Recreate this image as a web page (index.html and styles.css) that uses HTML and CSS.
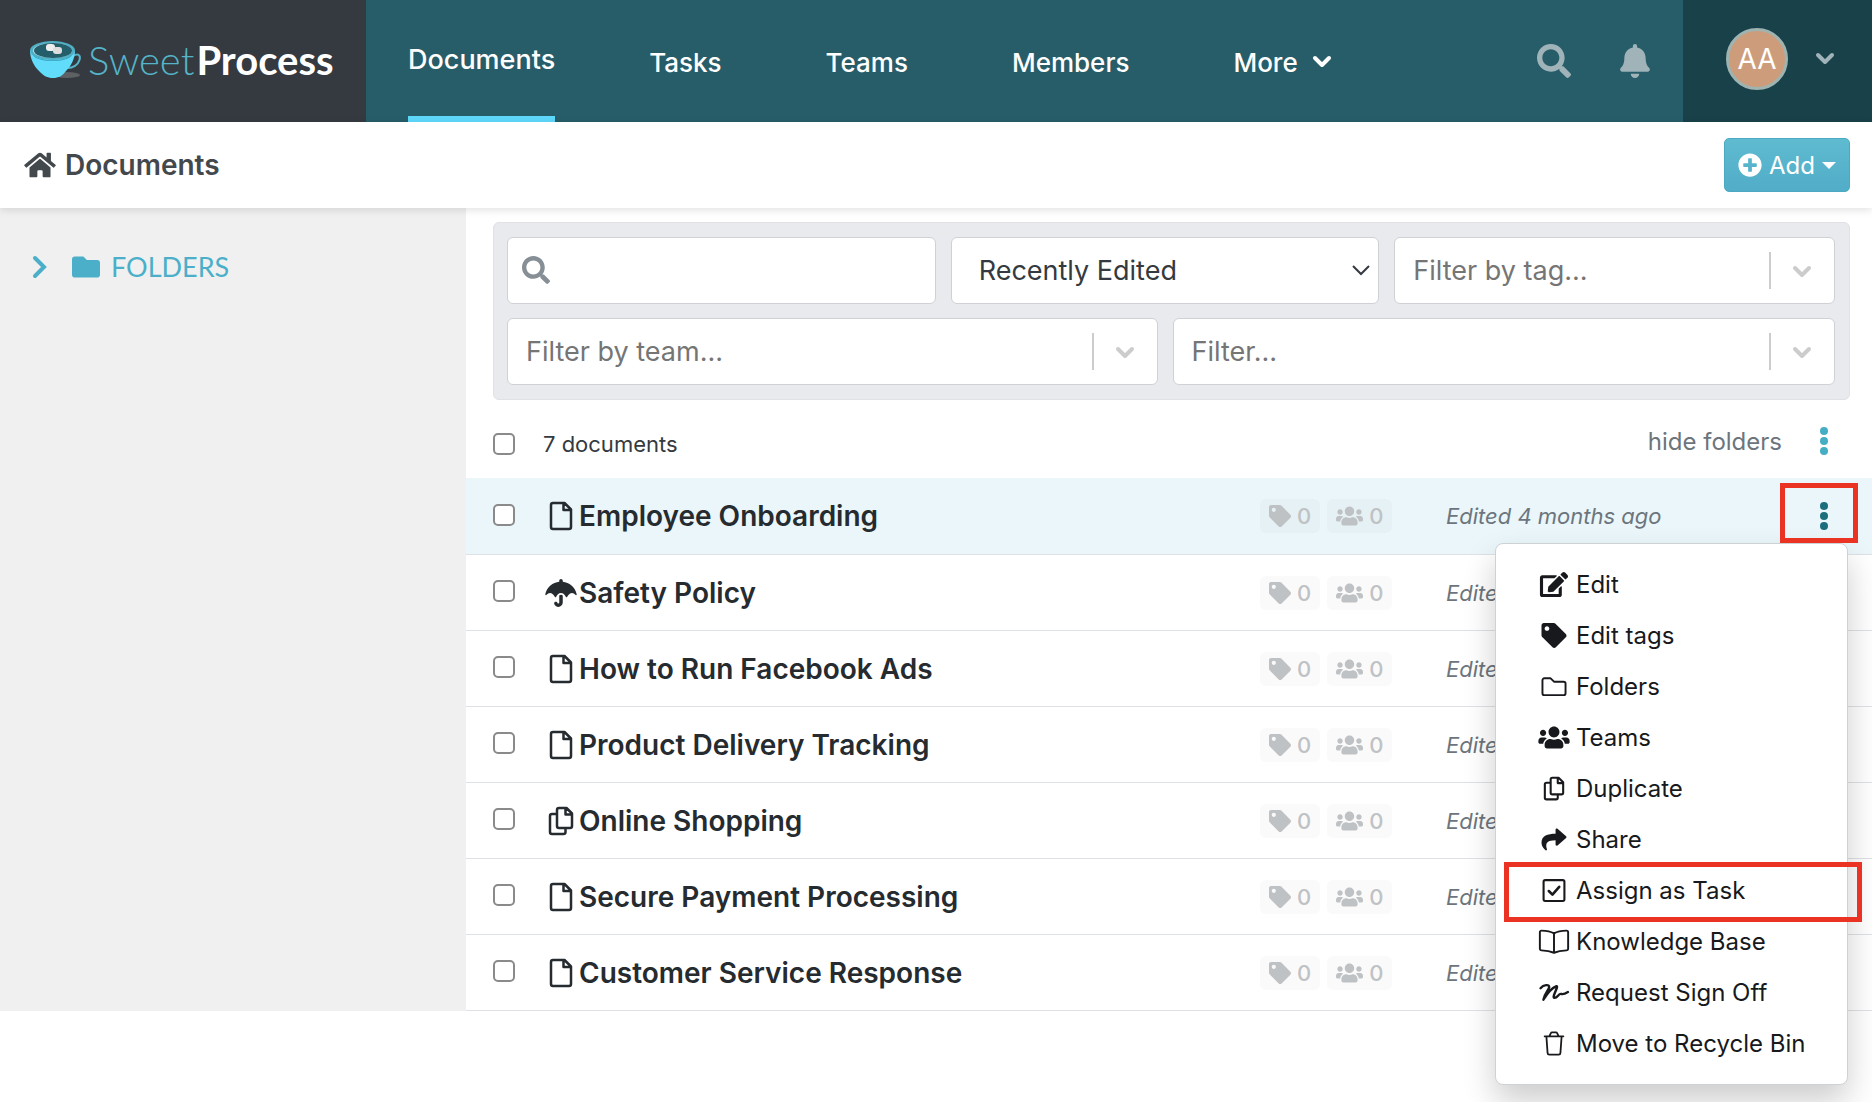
FILE: index.html
```html
<!DOCTYPE html>
<html lang="en">
<head>
  <meta charset="UTF-8" />
  <meta name="viewport" content="width=device-width, initial-scale=1.0"/>
  <title>Documents | SweetProcess</title>
  <link rel="stylesheet" href="styles.css">
</head>
<body>

<!-- icon sprite -->
<svg class="sprite" aria-hidden="true">
  <symbol id="i-search" viewBox="0 0 512 512"><path d="M505 442.7L405.3 343c-4.5-4.5-10.6-7-17-7H372c27.6-35.3 44-79.7 44-128C416 93.1 322.9 0 208 0S0 93.1 0 208s93.1 208 208 208c48.3 0 92.7-16.4 128-44v16.3c0 6.4 2.5 12.5 7 17l99.7 99.7c9.4 9.4 24.6 9.4 33.9 0l28.3-28.3c9.4-9.4 9.4-24.6.1-34zM208 336c-70.7 0-128-57.2-128-128 0-70.7 57.2-128 128-128 70.7 0 128 57.2 128 128 0 70.7-57.2 128-128 128z"/></symbol>
  <symbol id="i-bell" viewBox="0 0 448 512"><path d="M224 512c35.32 0 63.97-28.65 63.97-64H160.03c0 35.35 28.65 64 63.97 64zm215.39-149.71c-19.32-20.76-55.47-51.99-55.47-154.29 0-77.7-54.48-139.9-127.94-155.16V32c0-17.67-14.32-32-31.98-32s-31.98 14.33-31.98 32v20.84C118.56 68.1 64.08 130.3 64.08 208c0 102.3-36.15 133.53-55.47 154.29-6 6.45-8.66 14.16-8.61 21.71.11 16.4 12.98 32 32.1 32h383.8c19.12 0 32-15.6 32.1-32 .05-7.55-2.61-15.27-8.61-21.71z"/></symbol>
  <symbol id="i-home" viewBox="0 0 576 512"><path d="M280.37 148.26L96 300.11V464a16 16 0 0 0 16 16l112.06-.29a16 16 0 0 0 15.92-16V368a16 16 0 0 1 16-16h64a16 16 0 0 1 16 16v95.64a16 16 0 0 0 16 16.05L464 480a16 16 0 0 0 16-16V300L295.67 148.26a12.19 12.19 0 0 0-15.3 0zM571.6 251.47L488 182.56V44.05a12 12 0 0 0-12-12h-56a12 12 0 0 0-12 12v72.61L318.47 43a48 48 0 0 0-61 0L4.34 251.47a12 12 0 0 0-1.6 16.9l25.5 31A12 12 0 0 0 45.15 301l235.22-193.74a12.19 12.19 0 0 1 15.3 0L530.9 301a12 12 0 0 0 16.9-1.6l25.5-31a12 12 0 0 0-1.7-16.93z"/></symbol>
  <symbol id="i-plus" viewBox="0 0 512 512"><path d="M256 8C119 8 8 119 8 256s111 248 248 248 248-111 248-248S393 8 256 8zm144 276c0 6.6-5.4 12-12 12h-92v92c0 6.6-5.4 12-12 12h-56c-6.6 0-12-5.4-12-12v-92h-92c-6.6 0-12-5.4-12-12v-56c0-6.6 5.4-12 12-12h92v-92c0-6.6 5.4-12 12-12h56c6.6 0 12 5.4 12 12v92h92c6.6 0 12 5.4 12 12v56z"/></symbol>
  <symbol id="i-folder" viewBox="0 0 512 512"><path d="M464 128H272l-64-64H48C21.49 64 0 85.49 0 112v288c0 26.51 21.49 48 48 48h416c26.51 0 48-21.49 48-48V176c0-26.51-21.49-48-48-48z"/></symbol>
  <symbol id="i-tag" viewBox="0 0 512 512"><path d="M0 252.118V48C0 21.49 21.49 0 48 0h204.118a48 48 0 0 1 33.941 14.059l211.882 211.882c18.745 18.745 18.745 49.137 0 67.882L293.823 497.941c-18.745 18.745-49.137 18.745-67.882 0L14.059 286.059A48 48 0 0 1 0 252.118zM112 64c-26.51 0-48 21.49-48 48s21.49 48 48 48 48-21.49 48-48-21.49-48-48-48z"/></symbol>
  <symbol id="i-users" viewBox="0 0 640 512"><path d="M96 224c35.3 0 64-28.7 64-64s-28.7-64-64-64-64 28.7-64 64 28.7 64 64 64zm448 0c35.3 0 64-28.7 64-64s-28.7-64-64-64-64 28.7-64 64 28.7 64 64 64zm32 32h-64c-17.6 0-33.5 7.1-45.1 18.6 40.3 22.1 68.9 62 75.1 109.4h66c17.7 0 32-14.3 32-32v-32c0-35.3-28.7-64-64-64zm-256 0c61.9 0 112-50.1 112-112S381.9 32 320 32 208 82.1 208 144s50.1 112 112 112zm76.8 32h-8.3c-20.8 10-43.9 16-68.5 16s-47.6-6-68.5-16h-8.3C179.6 288 128 339.6 128 403.2V432c0 26.5 21.5 48 48 48h288c26.5 0 48-21.5 48-48v-28.8c0-63.6-51.6-115.2-115.2-115.2zm-223.7-13.4C161.5 263.1 145.6 256 128 256H64c-35.3 0-64 28.7-64 64v32c0 17.7 14.3 32 32 32h65.9c6.3-47.4 34.9-87.3 75.2-109.4z"/></symbol>
  <symbol id="i-share" viewBox="0 0 512 512"><path d="M503.691 189.836L327.687 37.851C312.281 24.546 288 35.347 288 56.015v80.053C127.371 137.907 0 170.1 0 322.326c0 61.441 39.581 122.309 83.333 154.132 13.653 9.931 33.111-2.533 28.077-18.631C66.066 312.814 132.917 274.316 288 272.085V360c0 20.7 24.3 31.453 39.687 18.164l176.004-152c11.071-9.562 11.086-26.753 0-36.328z"/></symbol>
  <symbol id="i-umbrella" viewBox="0 0 576 512"><path d="M575.7 280.8C547.1 144.5 437.3 62.6 320 49.9V32c0-17.7-14.3-32-32-32s-32 14.3-32 32v17.9C138.3 62.6 29.5 144.5.3 280.8c-2.2 10.1 8.5 21.3 18.7 11.4 52-55 107.7-52.4 158.6 37 5.3 9.5 14.9 8.6 19.7 0 20.2-35.4 44.9-73.2 90.7-73.2 58.5 0 88.2 68.8 90.7 73.2 4.8 8.6 14.4 9.5 19.7 0 51-89.5 107.1-91.4 158.6-37 10.3 10 20.9-1.3 18.7-11.4zM256 301.7V432c0 8.8-7.2 16-16 16-7.8 0-13.2-5.3-15.1-10.7-5.9-16.7-24.1-25.4-40.8-19.5-16.7 5.9-25.4 24.2-19.5 40.8 11.2 31.9 41.6 53.3 75.4 53.3 44.1 0 80-35.9 80-80V301.6c-9.1-7.9-19.8-13.6-32-13.6-12.3.1-22.4 4.8-32 13.7z"/></symbol>
  <symbol id="i-edit" viewBox="0 0 576 512"><path d="M402.6 83.2l90.2 90.2c3.8 3.8 3.8 10 0 13.8L274.4 405.6l-92.8 10.3c-12.4 1.4-22.9-9.1-21.5-21.5l10.3-92.8L388.8 83.2c3.8-3.8 10-3.8 13.8 0zm162-22.9l-48.8-48.8c-15.2-15.2-39.9-15.2-55.2 0l-35.4 35.4c-3.8 3.8-3.8 10 0 13.8l90.2 90.2c3.8 3.8 10 3.8 13.8 0l35.4-35.4c15.2-15.3 15.2-40 0-55.2zM384 346.2V448H64V128h229.8c3.2 0 6.2-1.3 8.5-3.5l40-40c7.6-7.6 2.2-20.5-8.5-20.5H48C21.5 64 0 85.5 0 112v352c0 26.5 21.5 48 48 48h352c26.5 0 48-21.5 48-48V306.2c0-10.7-12.9-16-20.5-8.5l-40 40c-2.2 2.3-3.5 5.3-3.5 8.5z"/></symbol>
  <symbol id="i-file" viewBox="0 0 24 30"><path class="line" d="M4 2h11.500l6.500 6.500V26a2 2 0 0 1-2 2H4a2 2 0 0 1-2-2V4a2 2 0 0 1 2-2zM14.500 2.500V9H21.500"/></symbol>
  <symbol id="i-copy" viewBox="0 0 26 30"><path class="line" d="M11 2h7.500l5.500 5.500V20a2 2 0 0 1-2 2H11a2 2 0 0 1-2-2V4a2 2 0 0 1 2-2zM17.500 2.500V8.500H23.500M8.500 8H4a2 2 0 0 0-2 2v16a2 2 0 0 0 2 2h11.500a2 2 0 0 0 2-2v-3.500"/></symbol>
  <symbol id="i-folder-line" viewBox="0 0 26 26"><path class="line thin" d="M3 4.500h6.500l3.500 3.500h10a2 2 0 0 1 2 2V20a2 2 0 0 1-2 2H3a2 2 0 0 1-2-2V6.500a2 2 0 0 1 2-2z"/></symbol>
  <symbol id="i-task" viewBox="0 0 24 24"><path class="line thin" d="M3.500 2h17a1.500 1.500 0 0 1 1.500 1.500v17a1.500 1.500 0 0 1-1.500 1.500h-17A1.500 1.500 0 0 1 2 20.500v-17A1.500 1.500 0 0 1 3.500 2z"/><path class="line" d="M7 12.500l3.500 3.500 6.500-7.500"/></symbol>
  <symbol id="i-book" viewBox="0 0 32 26"><path class="line thin" d="M16 4.500C12.500 2.500 8 1.800 3 1.700A1.700 1.700 0 0 0 1.300 3.400v17a1.700 1.700 0 0 0 1.700 1.800c5 .2 9 .8 13 2.500 4-1.700 8-2.300 13-2.500a1.700 1.700 0 0 0 1.700-1.800v-17A1.700 1.700 0 0 0 29 1.700C24 1.800 19.500 2.500 16 4.500zM16 4.500v20"/></symbol>
  <symbol id="i-sign" viewBox="0 0 32 26"><path class="line" d="M2 8.500c3-3.500 9.500-4.500 9-1C10.600 10.500 6 14 5 20.500 9.500 13 14 8 18.500 6.500c3-.7-5.500 12-2 12 3.500 0 4-4.500 7-4 1.800.3 2.500.8 7-2"/></symbol>
  <symbol id="i-trash" viewBox="0 0 24 28"><path class="line thin" d="M1.500 6h21M3.500 6.500l1.300 18a2 2 0 0 0 2 1.900h10.400a2 2 0 0 0 2-1.900l1.300-18M7 5.500l1.500-3.200A1.500 1.500 0 0 1 9.800 1.500h4.400a1.500 1.500 0 0 1 1.300.8L17 5.500"/></symbol>
  <symbol id="i-dots" viewBox="0 0 10 30"><circle cx="5" cy="5" r="4"/><circle cx="5" cy="15" r="4"/><circle cx="5" cy="25" r="4"/></symbol>
  <symbol id="i-down" viewBox="0 0 20 14"><path class="chev" d="M3 3l7 7 7-7"/></symbol>
</svg>

<header class="topbar">
  <a class="logo" href="#">
    <svg class="cup" viewBox="0 0 52 38">
      <ellipse cx="37" cy="34" rx="13" ry="3" fill="#5d6164"/>
      <path d="M43 15c5-3 8-1 6.500 4-1.500 5-6.500 8-12 8" fill="none" stroke="#55b4c9" stroke-width="2"/>
      <path d="M0 9c0 9 4 16 9 21 5 5 8 7 14 7s9-2 13-7c5-5 9-12 9-21z" fill="#62dcfb"/>
      <ellipse cx="22.500" cy="9.500" rx="22.500" ry="9.500" fill="#4fb0c6"/>
      <ellipse cx="22.500" cy="9.500" rx="19.500" ry="7.500" fill="#b9dde4"/>
      <ellipse cx="23" cy="9.500" rx="19" ry="7.500" fill="#235e6a"/>
      <path d="M3 14c8 7 31 7 39 0-4 8-35 8-39 0z" fill="#37a0ba"/>
      <rect x="16" y="3" width="9" height="7" rx="3" fill="#eee"/>
      <rect x="23" y="6" width="9" height="7" rx="3" fill="#ddd"/>
    </svg>
    <span class="logo-text"><span>Sweet</span><b>Process</b></span>
  </a>
  <nav class="nav">
    <a class="active" href="#">Documents</a>
    <a href="#">Tasks</a>
    <a href="#">Teams</a>
    <a href="#">Members</a>
    <a href="#">More <svg class="down"><use href="#i-down"/></svg></a>
  </nav>
  <div class="tools">
    <button type="button" aria-label="Search"><svg class="i-search"><use href="#i-search"/></svg></button>
    <button type="button" aria-label="Notifications"><svg class="i-bell"><use href="#i-bell"/></svg></button>
  </div>
  <button class="account" type="button" aria-label="Account">
    <span class="avatar">AA</span>
    <svg class="down"><use href="#i-down"/></svg>
  </button>
</header>

<div class="subbar">
  <h1><svg><use href="#i-home"/></svg>Documents</h1>
  <button class="add" type="button"><svg><use href="#i-plus"/></svg>Add<span class="caret"></span></button>
</div>

<div class="page">
  <aside class="sidebar">
    <a href="#">
      <svg class="arrow" viewBox="0 0 16 24"><path d="M3 3l9 9-9 9"/></svg>
      <svg class="folder"><use href="#i-folder"/></svg>
      FOLDERS
    </a>
  </aside>

  <main class="content">
    <form class="filters">
      <div class="filter-row">
        <div class="field search">
          <svg><use href="#i-search"/></svg>
          <input type="text" aria-label="Search documents">
        </div>
        <div class="field sort">
          <select aria-label="Sort by"><option>Recently Edited</option></select>
          <svg viewBox="0 0 20 14"><path d="M2 3l8 8 8-8"/></svg>
        </div>
        <div class="field pick last">
          <select aria-label="Filter by tag"><option>Filter by tag...</option></select>
          <svg class="down"><use href="#i-down"/></svg>
        </div>
      </div>
      <div class="filter-row">
        <div class="field pick">
          <select aria-label="Filter by team"><option>Filter by team...</option></select>
          <svg class="down"><use href="#i-down"/></svg>
        </div>
        <div class="field pick last">
          <select aria-label="Filter"><option>Filter...</option></select>
          <svg class="down"><use href="#i-down"/></svg>
        </div>
      </div>
    </form>

    <div class="list-head">
      <input type="checkbox" id="all">
      <label for="all">7 documents</label>
      <div class="list-tools">
        <a href="#">hide folders</a>
        <button class="dots" type="button" aria-label="List options"><svg><use href="#i-dots"/></svg></button>
      </div>
    </div>

    <table class="docs">
      <tbody>
        <tr class="selected">
          <td class="c-check"><input type="checkbox" aria-label="Employee Onboarding"></td>
          <td class="c-name"><a href="#"><svg><use href="#i-file"/></svg>Employee Onboarding</a></td>
          <td class="c-badges"><div><span class="badge"><svg class="tag"><use href="#i-tag"/></svg>0</span><span class="badge"><svg class="users"><use href="#i-users"/></svg>0</span></div></td>
          <td class="c-edited">Edited 4 months ago</td>
          <td class="c-menu">
            <button class="dots" type="button" aria-label="Document options"><svg><use href="#i-dots"/></svg></button>
            <span class="mark mark-dots"></span>
            <ul class="menu">
              <li><a href="#"><svg><use href="#i-edit"/></svg>Edit</a></li>
              <li><a href="#"><svg><use href="#i-tag"/></svg>Edit tags</a></li>
              <li><a href="#"><svg><use href="#i-folder-line"/></svg>Folders</a></li>
              <li><a href="#"><svg><use href="#i-users"/></svg>Teams</a></li>
              <li><a href="#"><svg><use href="#i-copy"/></svg>Duplicate</a></li>
              <li><a href="#"><svg><use href="#i-share"/></svg>Share</a></li>
              <li><a href="#"><svg><use href="#i-task"/></svg>Assign as Task</a><span class="mark mark-task"></span></li>
              <li><a href="#"><svg><use href="#i-book"/></svg>Knowledge Base</a></li>
              <li><a href="#"><svg><use href="#i-sign"/></svg>Request Sign Off</a></li>
              <li><a href="#"><svg><use href="#i-trash"/></svg>Move to Recycle Bin</a></li>
            </ul>
          </td>
        </tr>
        <tr>
          <td class="c-check"><input type="checkbox" aria-label="Safety Policy"></td>
          <td class="c-name"><a href="#"><svg class="umbrella"><use href="#i-umbrella"/></svg>Safety Policy</a></td>
          <td class="c-badges"><div><span class="badge"><svg class="tag"><use href="#i-tag"/></svg>0</span><span class="badge"><svg class="users"><use href="#i-users"/></svg>0</span></div></td>
          <td class="c-edited">Edited 4 months ago</td>
          <td class="c-menu"></td>
        </tr>
        <tr>
          <td class="c-check"><input type="checkbox" aria-label="How to Run Facebook Ads"></td>
          <td class="c-name"><a href="#"><svg><use href="#i-file"/></svg>How to Run Facebook Ads</a></td>
          <td class="c-badges"><div><span class="badge"><svg class="tag"><use href="#i-tag"/></svg>0</span><span class="badge"><svg class="users"><use href="#i-users"/></svg>0</span></div></td>
          <td class="c-edited">Edited 4 months ago</td>
          <td class="c-menu"></td>
        </tr>
        <tr>
          <td class="c-check"><input type="checkbox" aria-label="Product Delivery Tracking"></td>
          <td class="c-name"><a href="#"><svg><use href="#i-file"/></svg>Product Delivery Tracking</a></td>
          <td class="c-badges"><div><span class="badge"><svg class="tag"><use href="#i-tag"/></svg>0</span><span class="badge"><svg class="users"><use href="#i-users"/></svg>0</span></div></td>
          <td class="c-edited">Edited 4 months ago</td>
          <td class="c-menu"></td>
        </tr>
        <tr>
          <td class="c-check"><input type="checkbox" aria-label="Online Shopping"></td>
          <td class="c-name"><a href="#"><svg><use href="#i-copy"/></svg>Online Shopping</a></td>
          <td class="c-badges"><div><span class="badge"><svg class="tag"><use href="#i-tag"/></svg>0</span><span class="badge"><svg class="users"><use href="#i-users"/></svg>0</span></div></td>
          <td class="c-edited">Edited 4 months ago</td>
          <td class="c-menu"></td>
        </tr>
        <tr>
          <td class="c-check"><input type="checkbox" aria-label="Secure Payment Processing"></td>
          <td class="c-name"><a href="#"><svg><use href="#i-file"/></svg>Secure Payment Processing</a></td>
          <td class="c-badges"><div><span class="badge"><svg class="tag"><use href="#i-tag"/></svg>0</span><span class="badge"><svg class="users"><use href="#i-users"/></svg>0</span></div></td>
          <td class="c-edited">Edited 4 months ago</td>
          <td class="c-menu"></td>
        </tr>
        <tr>
          <td class="c-check"><input type="checkbox" aria-label="Customer Service Response"></td>
          <td class="c-name"><a href="#"><svg><use href="#i-file"/></svg>Customer Service Response</a></td>
          <td class="c-badges"><div><span class="badge"><svg class="tag"><use href="#i-tag"/></svg>0</span><span class="badge"><svg class="users"><use href="#i-users"/></svg>0</span></div></td>
          <td class="c-edited">Edited 4 months ago</td>
          <td class="c-menu"></td>
        </tr>
      </tbody>
    </table>
  </main>
</div>

</body>
</html>
```

FILE: styles.css
```css
* { box-sizing: border-box; }
body {
  margin: 0;
  min-height: 100vh;
  background: #fff;
  color: #343a40;
  font-family: Inter, "Liberation Sans", sans-serif;
  font-size: 24px;
}
a { color: inherit; text-decoration: none; }
button, input, select { font: inherit; color: inherit; }
button { border: 0; padding: 0; background: none; cursor: pointer; }
svg { display: block; flex: none; fill: currentColor; }
.sprite { position: absolute; width: 0; height: 0; }
.line { fill: none; stroke: currentColor; stroke-width: 2.5; stroke-linejoin: round; stroke-linecap: round; }
.line.thin { stroke-width: 2; }
.chev { fill: none; stroke: currentColor; stroke-width: 4; stroke-linecap: round; stroke-linejoin: round; }
.down { width: 20px; height: 14px; }

/* top bar */
.topbar {
  display: flex;
  height: 122px;
  background: #275d69;
  color: #fff;
}
.logo {
  display: flex;
  align-items: center;
  width: 366px;
  padding: 0 0 2px 30px;
  background: #343a3f;
}
.cup { width: 52px; height: 38px; }
.logo-text {
  margin-left: 6px;
  font-family: Lato, sans-serif;
  font-size: 40px;
  line-height: 44px;
  white-space: nowrap;
}
.logo-text span { color: #55b4c9; font-weight: 300; }
.logo-text b { margin-left: 2px; font-weight: 700; }
.nav {
  display: flex;
  flex: 1;
  gap: 104px;
  padding-left: 42px;
  font-size: 26px;
  font-weight: 500;
}
.nav a { display: flex; align-items: center; gap: 14px; padding-top: 2px; }
.nav .active {
  margin-right: -10px;
  border-bottom: 6px solid #5ed9fb;
  font-size: 27px;
}
.tools { display: flex; gap: 49px; padding-right: 33px; color: #9fb3b9; }
.tools .i-search { width: 34px; height: 34px; }
.tools .i-bell { width: 30px; height: 34px; }
.account {
  display: flex;
  align-items: center;
  gap: 27px;
  width: 189px;
  padding: 0 0 4px 43px;
  background: #19414a;
  color: #9fb3b9;
}
.avatar {
  width: 62px;
  height: 62px;
  border: 3px solid #9fb3b0;
  border-radius: 50%;
  background: #cd9d7b;
  color: #fff;
  font-size: 28px;
  line-height: 56px;
}

/* page title bar */
.subbar {
  position: relative;
  display: flex;
  align-items: center;
  justify-content: space-between;
  height: 86px;
  padding: 0 22px 0 24px;
  background: #fff;
  box-shadow: 0 2px 8px rgba(0, 0, 0, .12);
}
.subbar h1 {
  display: flex;
  align-items: center;
  gap: 9px;
  margin: 0;
  color: #43484d;
  font-size: 28px;
  font-weight: 600;
}
.subbar h1 svg { width: 32px; height: 28px; }
.add {
  display: flex;
  align-items: center;
  gap: 7px;
  height: 54px;
  padding: 0 13px;
  border: 1px solid #4ba9c1;
  border-radius: 5px;
  background: linear-gradient(#5fbbd0, #51adc8);
  color: #fff;
}
.add svg { width: 24px; height: 24px; }
.caret {
  border: 7px solid transparent;
  border-top-color: #fff;
  border-bottom: 0;
}

/* layout */
.page { display: flex; }
.sidebar {
  width: 466px;
  padding: 42px 32px;
  background: #f0f0f0;
  color: #4bafc9;
  font-family: Lato, sans-serif;
  font-size: 27px;
  line-height: 34px;
}
.sidebar a { display: flex; align-items: center; }
.arrow { width: 16px; height: 24px; margin-right: 23px; }
.arrow path { fill: none; stroke: currentColor; stroke-width: 4; stroke-linecap: round; }
.folder { width: 30px; height: 28px; margin-right: 10px; }
.content { flex: 1; min-width: 0; }

/* filters */
.filters {
  display: flex;
  flex-direction: column;
  gap: 14px;
  margin: 14px 22px 0 27px;
  padding: 14px 14px 14px 13px;
  border: 1px solid #e0e0e5;
  border-radius: 6px;
  background: #e9eaee;
  font-size: 27px;
}
.filter-row { display: flex; gap: 15px; }
.field {
  position: relative;
  flex: 1;
  height: 67px;
  border: 1px solid #d0d1d5;
  border-radius: 6px;
  background: #fff;
}
.field.last { flex: 1 1 14px; }
.field input, .field select {
  width: 100%;
  height: 100%;
  padding: 0 18px;
  border: 0;
  outline: 0;
  background: none;
  appearance: none;
}
.field svg { position: absolute; pointer-events: none; }
.search svg { left: 14px; top: 18px; width: 28px; height: 28px; color: #868e96; }
.search input { padding-left: 56px; }
.sort select { padding-left: 27px; }
.sort svg { right: 7px; top: 25px; width: 20px; height: 14px; }
.sort path { fill: none; stroke: currentColor; stroke-width: 2; }
.pick select { color: #757575; }
.pick svg { right: 22px; top: 27px; color: #ccc; }
.pick::after {
  content: "";
  position: absolute;
  right: 63px;
  top: 14px;
  width: 2px;
  height: 37px;
  background: #ccc;
}

/* list */
input[type="checkbox"] {
  display: block;
  appearance: none;
  width: 22px;
  height: 22px;
  margin: 0;
  border: 2px solid #8a8a8a;
  border-radius: 5px;
  background: #fff;
}
.list-head {
  display: flex;
  align-items: center;
  height: 78px;
  padding: 10px 43px 0 27px;
}
.list-head label { flex: 1; margin-left: 28px; font-size: 22px; }
.list-tools {
  display: flex;
  align-items: center;
  gap: 37px;
  padding-bottom: 6px;
  color: #6c757d;
}
.dots { color: #45adc4; }
.dots svg { width: 10px; height: 30px; }
.docs {
  width: 100%;
  border-collapse: collapse;
  table-layout: fixed;
}
.docs td {
  height: 76px;
  padding: 2px 0 0;
  border-bottom: 1px solid #dee2e6;
}
.docs .selected td { padding-top: 0; }
.selected { background: #eaf6f9; }
.docs .c-check, .docs .selected .c-check { width: 77px; padding: 0 0 2px 27px; }
.c-name { font-size: 28px; font-weight: 600; color: #262b30; }
.c-name a { display: flex; align-items: center; }
.c-name svg { width: 36px; height: 30px; }
.c-name .umbrella { width: 32px; height: 28px; margin: 0 2px; }
.docs .c-badges { width: 186px; }
.c-badges div { display: flex; gap: 7px; }
.c-edited { width: 334px; color: #6c757d; font-size: 22px; font-style: italic; white-space: nowrap; }
.c-menu { position: relative; width: 92px; }
.c-menu .dots { display: block; margin-left: 39px; color: #1c6d7d; }
.badge {
  display: flex;
  align-items: center;
  gap: 6px;
  height: 34px;
  padding: 0 9px;
  border-radius: 6px;
  background: rgba(120, 120, 120, .04);
  color: #bfc2c4;
  font-size: 22px;
  font-weight: 500;
}
.badge .tag { width: 22px; height: 22px; }
.badge .users { width: 27px; height: 22px; }

/* row menu */
.menu {
  position: absolute;
  z-index: 2;
  top: 65px;
  right: 24px;
  width: 353px;
  margin: 0;
  padding: 15px 0;
  border: 1px solid #cfd2d4;
  border-radius: 8px;
  background: #fff;
  box-shadow: 0 16px 32px rgba(0, 0, 0, .2);
  list-style: none;
  color: #17191c;
}
.menu li { position: relative; }
.menu a { display: flex; align-items: center; gap: 6px; height: 51px; padding-left: 42px; }
.menu svg { width: 32px; height: 25px; }

/* red highlights */
.mark { position: absolute; z-index: 3; border: 5px solid #ea3323; pointer-events: none; }
.mark-dots { top: 5px; right: 14px; width: 78px; height: 60px; }
.mark-task { top: -3px; left: 8px; right: -15px; height: 60px; }
```
